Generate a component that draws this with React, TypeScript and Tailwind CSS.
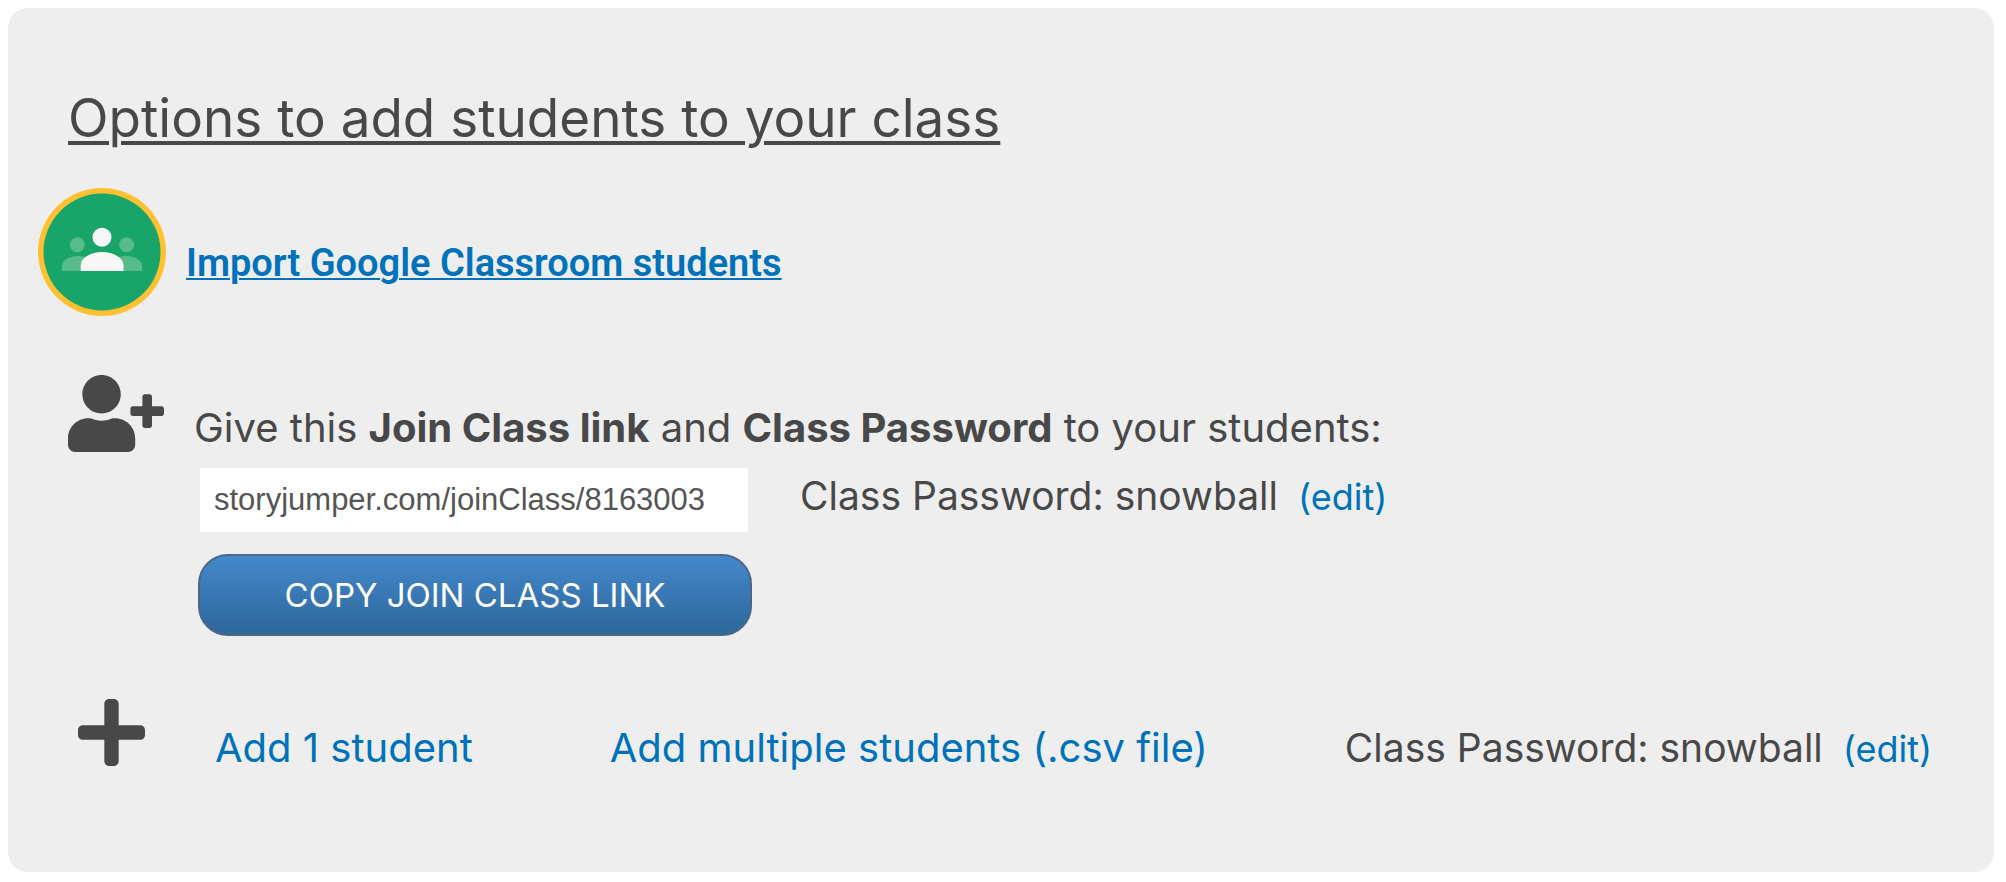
import { useState } from "react";
import { FaPlus, FaUserPlus } from "react-icons/fa";

const JOIN_LINK = "storyjumper.com/joinClass/8163003";
const PASSWORD = "snowball";

function ClassroomLogo() {
  return (
    <svg viewBox="0 0 128 128" className="size-32 shrink-0" aria-hidden="true">
      <circle cx="64" cy="64" r="64" fill="#ffc131" />
      <circle cx="64" cy="64" r="58.5" fill="#19a469" />
      <g fill="#57bb8a">
        <circle cx="39.3" cy="56.7" r="7.5" />
        <circle cx="88.7" cy="56.7" r="7.5" />
        <path d="M24 83v-5c0-6 8-10 16-10s15 4 15 10v5z" />
        <path d="M104 83v-5c0-6-8-10-16-10s-15 4-15 10v5z" />
      </g>
      <circle cx="64" cy="49.3" r="9.5" fill="#f7f7f7" />
      <path d="M42.7 83v-5.5c0-8 10.5-13.5 21.3-13.5s21.5 5.5 21.5 13.5V83z" fill="#f7f7f7" />
    </svg>
  );
}

function ClassPassword() {
  return (
    <p className="text-[39px]">
      Class Password: {PASSWORD}
      <a href="#edit-password" className="ml-5 text-4xl text-[#0072bc]">
        (edit)
      </a>
    </p>
  );
}

export default function App() {
  const [link, setLink] = useState<string>(JOIN_LINK);

  const handleCopy = () => {
    navigator.clipboard?.writeText(link);
  };

  return (
    <main className="bg-white pt-2 pr-3 pb-2 pl-2 font-['Inter',sans-serif] text-[40px] leading-12 text-[#484848]">
      <section className="rounded-[20px] bg-[#eeeeee] pt-20 pr-6 pb-[100px] pl-[30px]">
        <h1 className="pl-[30px] text-[53px] leading-15 underline decoration-4 underline-offset-4">
          Options to add students to your class
        </h1>

        <div className="mt-10 flex items-center gap-5">
          <ClassroomLogo />
          <a
            href="#import"
            className="pt-[22px] font-['Roboto',sans-serif] text-[38px] font-semibold text-[#0072bc] underline decoration-2 underline-offset-2"
          >
            Import Google Classroom students
          </a>
        </div>

        <div className="mt-[59px] flex items-start gap-[30px] pl-[30px]">
          <FaUserPlus className="h-[77px] w-24 shrink-0" />
          <div className="pt-[29px]">
            <label htmlFor="join-link" className="block">
              Give this <strong>Join Class link</strong> and <strong>Class Password</strong> to your
              students:
            </label>
            <div className="mt-4 ml-1.5 flex flex-wrap items-start gap-x-[52px] leading-14">
              <input
                id="join-link"
                type="text"
                value={link}
                onChange={(e) => setLink(e.target.value)}
                className="h-16 w-[548px] bg-white px-3.5 font-['Liberation_Sans',sans-serif] text-[31px] text-[#555555] outline-none"
              />
              <ClassPassword />
            </div>
            <button
              type="button"
              onClick={handleCopy}
              className="mt-[22px] ml-1 h-[82px] w-[554px] rounded-[30px] border-2 border-[#4a6785] bg-linear-to-b from-[#4488cc] to-[#2d679b] text-[33px] text-white"
            >
              COPY JOIN CLASS LINK
            </button>
          </div>
        </div>

        <div className="mt-[58px] flex items-start gap-[70px] pl-10">
          <FaPlus className="h-[77px] w-[67px] shrink-0" />
          <div className="flex flex-wrap items-baseline gap-x-[137px] pt-[30px]">
            <a href="#add-one" className="text-[#0072bc]">
              Add 1 student
            </a>
            <a href="#add-multiple" className="text-[#0072bc]">
              Add multiple students (.csv file)
            </a>
            <ClassPassword />
          </div>
        </div>
      </section>
    </main>
  );
}
